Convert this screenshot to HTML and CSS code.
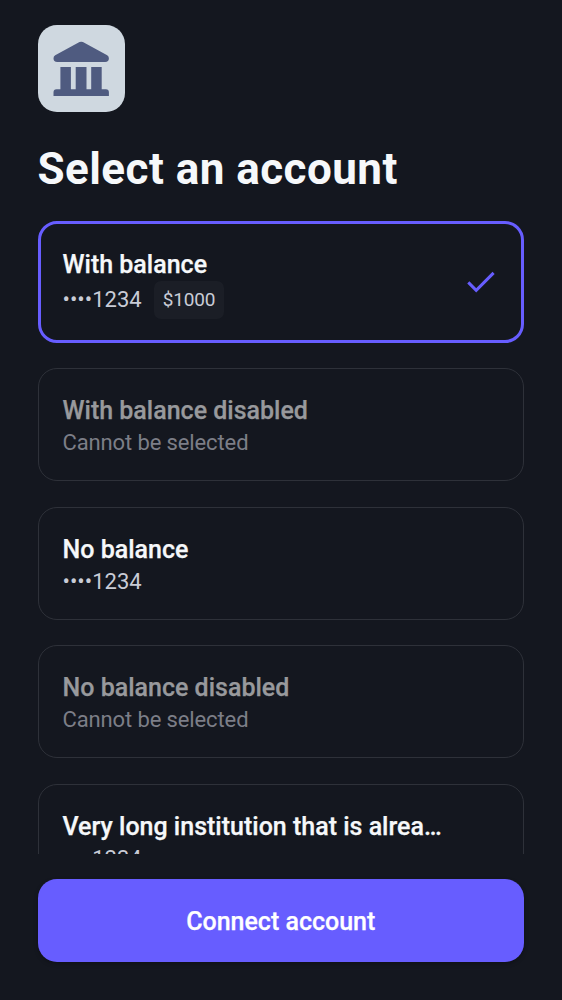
FILE: index.html
```html
<!DOCTYPE html>
<html lang="en">
<head>
<meta charset="utf-8">
<title>Select an account</title>
<link rel="stylesheet" href="styles.css">
</head>
<body>
<main class="screen">
  <section class="content">
    <div class="bank">
      <svg viewBox="0 0 87 87" width="87" height="87" aria-hidden="true"><path fill="#4f5b80" d="M17.2 30.3 41.5 17.1Q43.2 16.2 44.9 17.1L69.2 30.3Q70.9 31.2 70.9 33.2 70.9 37 67.1 37H19.3Q15.5 37 15.5 33.2 15.5 31.2 17.2 30.3ZM22.4 42H32.9V64.3H37.7V42H48.5V64.3H53.2V42H63.7V64.3H67.9Q70.9 64.3 70.9 67.3V71H15.5V67.3Q15.5 64.3 18.5 64.3H22.4Z"/></svg>
    </div>
    <h1 class="title">Select an account</h1>
    <div class="list">
      <div class="card selected">
        <div class="info">
          <div class="name">With balance</div>
          <div class="meta"><span>••••1234</span><span class="badge">$1000</span></div>
        </div>
        <svg class="check" viewBox="0 0 28 22" width="28" height="22" aria-hidden="true"><path fill="none" stroke="#675dff" stroke-width="3" d="M1.3 11.4 9.2 19.3 26.6 1.9"/></svg>
      </div>
      <div class="card disabled"><div class="info"><div class="name">With balance disabled</div><div class="meta caption">Cannot be selected</div></div></div>
      <div class="card"><div class="info"><div class="name">No balance</div><div class="meta">••••1234</div></div></div>
      <div class="card disabled"><div class="info"><div class="name">No balance disabled</div><div class="meta caption">Cannot be selected</div></div></div>
      <div class="card"><div class="info"><div class="name">Very long institution that is alrea…</div><div class="meta">••••1234</div></div></div>
    </div>
  </section>
  <footer class="footer"><button class="connect">Connect account</button></footer>
</main>
</body>
</html>
```
FILE: styles.css
```css
* { box-sizing: border-box; }
body { margin: 0; background: #14171f; font-family: Roboto, sans-serif; color: #f6f8fa; }
.screen { height: 1000px; display: flex; flex-direction: column; overflow: hidden; }
.content { height: 854px; flex: none; overflow: hidden; padding: 25px 38px 0 37.5px; }
.bank { width: 87.5px; height: 87px; border-radius: 19px; background: #cfd8e0; overflow: hidden; }
.bank svg { display: block; }
.title { margin: 31px 0 0; height: 78px; font-size: 44px; line-height: 52px; font-weight: 700; letter-spacing: 0.45px; white-space: nowrap; }
.list { display: flex; flex-direction: column; gap: 25.6px; }
.card { height: 113px; flex: none; border: 1.5px solid #2e3139; border-radius: 19px; padding: 24.8px 23.5px 0 24px; display: flex; justify-content: space-between; }
.card.selected { height: 121.6px; border: 3px solid #675dff; padding: 24px 26px 0 22px; }
.name { font-size: 25px; line-height: 34px; font-weight: 500; white-space: nowrap; -webkit-text-stroke: 0.25px currentColor; }
.meta { display: flex; align-items: center; font-size: 22px; line-height: 30px; color: #c9ccd6; white-space: nowrap; }
.caption { letter-spacing: -0.12px; }
.selected .meta { height: 35px; }
.badge { margin-left: 12px; height: 38px; line-height: 38px; padding: 0 9px; border-radius: 7px; background: #1b1e26; font-size: 19px; letter-spacing: -0.15px; }
.check { margin-top: 23px; }
.disabled .name { color: #98999c; }
.disabled .meta { color: #7c7e87; }
.footer { padding: 25px 38px 25px 37.5px; }
.connect { display: block; width: 100%; height: 83.4px; padding: 1px 0 0; border: 0; border-radius: 19px; background: #675dff; box-shadow: 0 2px 4px rgba(0, 0, 0, 0.25); color: #fff; font: 500 25px Roboto, sans-serif; -webkit-text-stroke: 0.25px currentColor; }
```
